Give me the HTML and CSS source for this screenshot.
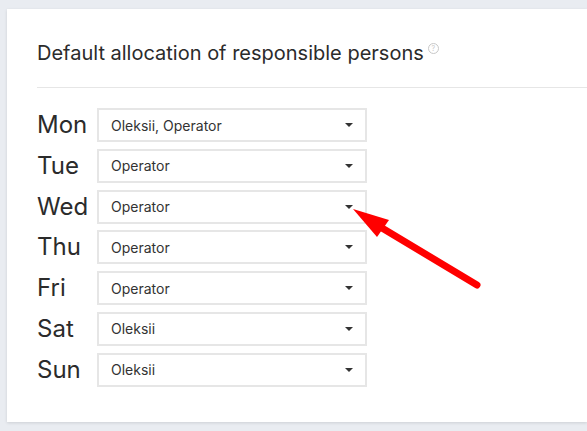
FILE: index.html
```html
<!DOCTYPE html>
<html>
<head>
<meta charset="utf-8">
<link rel="stylesheet" href="styles.css">
</head>
<body>
<div class="card">
  <div class="head">
    <h2 class="title">Default allocation of responsible persons<span class="help">?</span></h2>
  </div>
  <div class="rows">
    <div class="day">Mon</div><div class="select"><span>Oleksii, Operator</span><i class="caret"></i></div>
    <div class="day">Tue</div><div class="select"><span>Operator</span><i class="caret"></i></div>
    <div class="day">Wed</div><div class="select"><span>Operator</span><i class="caret"></i></div>
    <div class="day">Thu</div><div class="select"><span>Operator</span><i class="caret"></i></div>
    <div class="day">Fri</div><div class="select"><span>Operator</span><i class="caret"></i></div>
    <div class="day">Sat</div><div class="select"><span>Oleksii</span><i class="caret"></i></div>
    <div class="day">Sun</div><div class="select"><span>Oleksii</span><i class="caret"></i></div>
  </div>
</div>
<svg class="arrow" width="587" height="431" viewBox="0 0 587 431">
  <line x1="477" y1="285" x2="372" y2="222" stroke="#ff0000" stroke-width="7" stroke-linecap="round"/>
  <polygon points="353,209 389,220 377,237" fill="#ff0000"/>
</svg>
</body>
</html>
```
FILE: styles.css
```css
html, body {
  margin: 0;
  padding: 0;
}
body {
  background: #e9ecf1;
  width: 587px;
  height: 431px;
  overflow: hidden;
  position: relative;
  font-family: Inter, "Liberation Sans", sans-serif;
  color: #333;
}
.card {
  margin: 9px 0 0 7px;
  height: 413px;
  background: #fff;
  box-shadow: 0 1px 3px rgba(0,0,0,0.12);
  padding-left: 30px;
  box-sizing: border-box;
}
.head {
  padding-top: 31px;
  height: 79px;
  box-sizing: border-box;
  border-bottom: 1px solid #e6e6e6;
}
.title {
  margin: 0;
  font-size: 20px;
  font-weight: 400;
  line-height: 26px;
  color: #2b2b2b;
}
.help {
  display: inline-block;
  width: 9px;
  height: 9px;
  border: 1px solid #c8c8c8;
  border-radius: 50%;
  color: #c8c8c8;
  font-size: 7px;
  line-height: 9px;
  text-align: center;
  vertical-align: 9px;
  margin-left: 4px;
}
.rows {
  display: grid;
  grid-template-columns: 60px 270px;
  row-gap: 6.8px;
  margin-top: 20px;
}
.day {
  font-size: 24px;
  line-height: 34px;
  color: #2b2b2b;
}
.select {
  height: 34px;
  box-sizing: border-box;
  border: 2px solid #e6e6e6;
  display: flex;
  align-items: center;
  padding: 0 12px 0 12px;
  font-size: 14px;
  color: #333;
}
.select span {
  flex: 1;
}
.caret {
  width: 0;
  height: 0;
  border-left: 4px solid transparent;
  border-right: 4px solid transparent;
  border-top: 4px solid #333;
}
.arrow {
  position: absolute;
  left: 0;
  top: 0;
  pointer-events: none;
}
```
